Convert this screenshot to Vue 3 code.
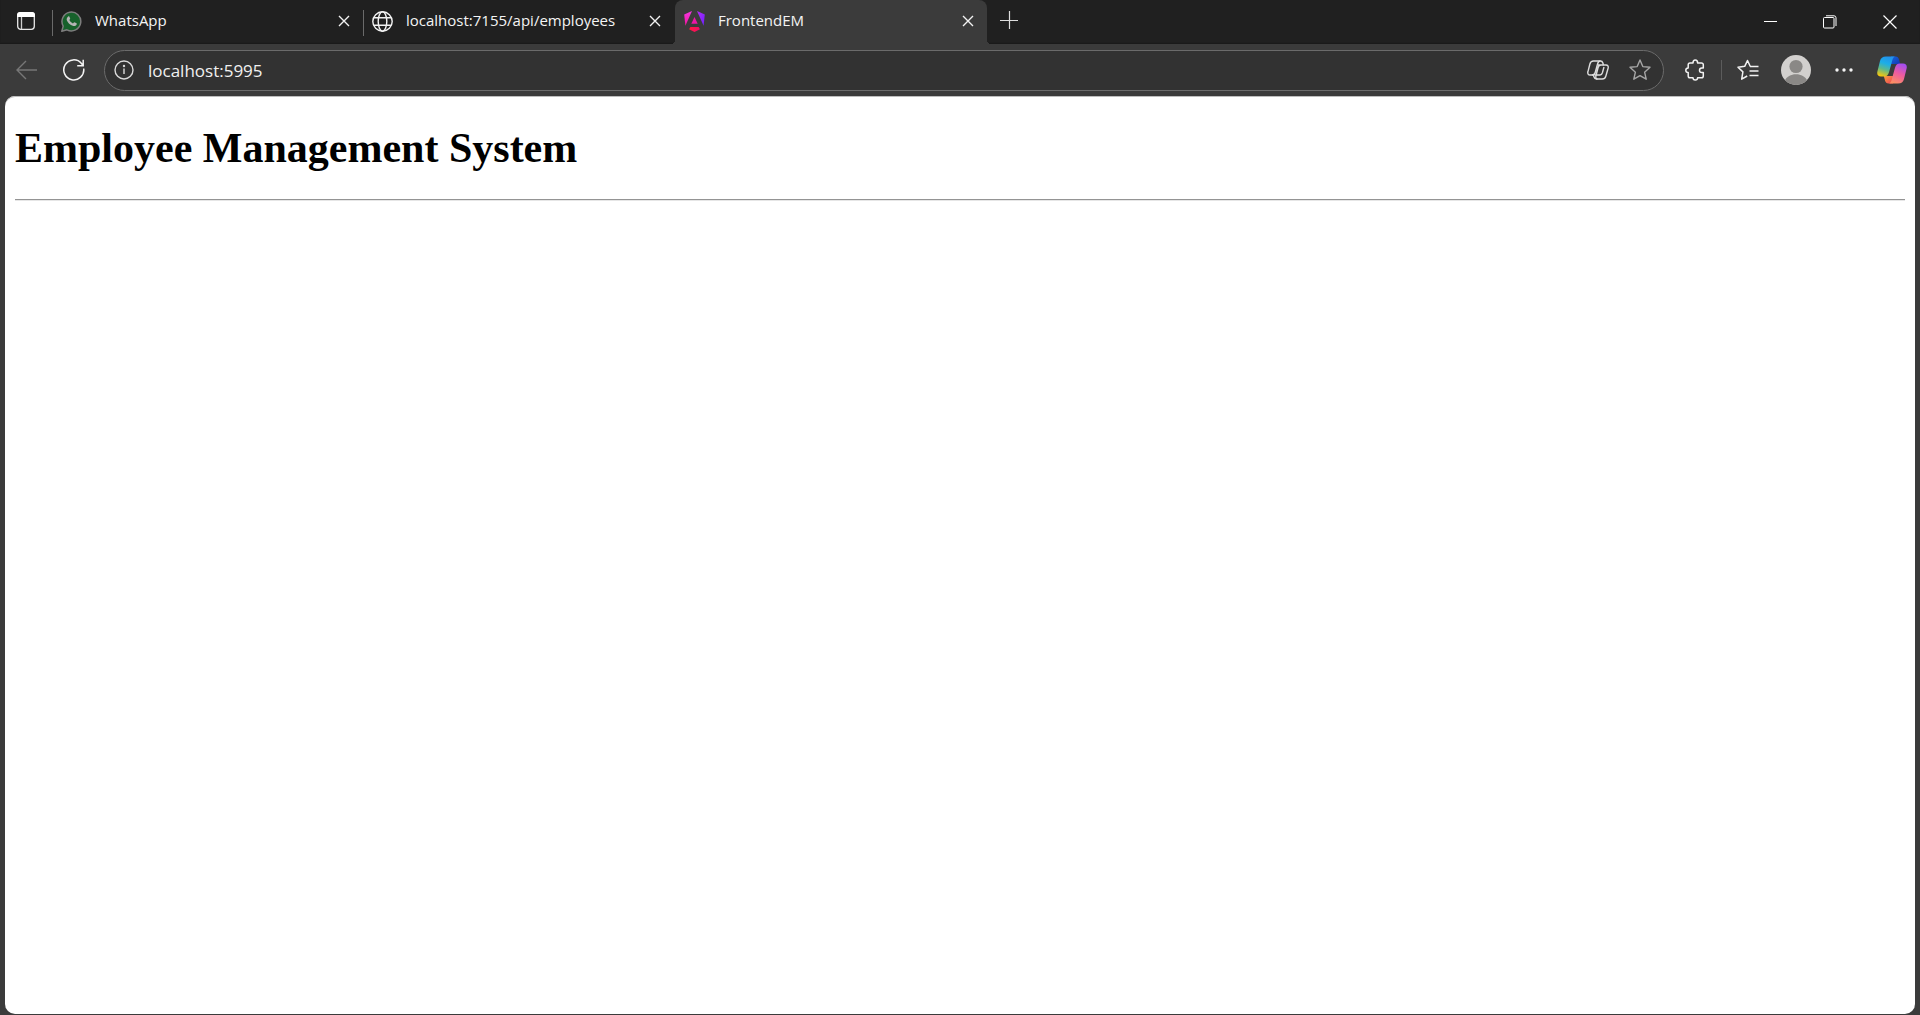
<script setup>
import { ref } from 'vue'

const tabs = ref([
  { id: 'whatsapp', title: 'WhatsApp' },
  { id: 'globe', title: 'localhost:7155/api/employees' },
  { id: 'angular', title: 'FrontendEM' },
])
const active = ref('angular')
const address = ref('localhost:5995')
</script>

<template>
  <div class="browser">
    <header class="strip">
      <button class="workspace" type="button" aria-label="Tab actions">
        <svg width="20" height="20" viewBox="0 0 20 20">
          <rect x="1.7" y="1.7" width="16.6" height="16.6" rx="3" fill="none" stroke="#e8e8e8" stroke-width="1.3" />
          <path d="M1 6V4a3 3 0 0 1 3-3h12a3 3 0 0 1 3 3v2z" fill="#fff" />
          <path d="M5.5 6v12" stroke="#cfcfcf" stroke-width="1.3" />
        </svg>
      </button>
      <nav class="tabs">
        <div v-for="tab in tabs" :key="tab.id" class="tab" :class="{ active: tab.id === active }">
          <svg v-if="tab.id === 'whatsapp'" class="favicon" viewBox="0 0 21 21">
            <path d="M.8 20.2l1.4-5.1A9.4 9.4 0 1 1 6 18.8z" fill="#17612b" stroke="#7d7d7d" stroke-width="1.5" stroke-linejoin="round" />
            <path d="M7.2 5.5c.5-.4 1-.2 1.2.2l.8 1.9c.1.4-.6 1-.8 1.4.8 1.7 2 2.7 3.6 3.4.5-.2 1-1.3 1.5-1.1l2 1c.5.3.2 1.2-.1 1.7-.7 1-2.1 1.2-3.1.9-3.5-1-5.5-3-6.5-5.6-.4-1.5.2-3 1.4-3.8z" fill="#b5b5b5" />
          </svg>
          <svg v-else-if="tab.id === 'globe'" class="favicon" viewBox="0 0 21 21" fill="none" stroke="#f2f2f2" stroke-width="1.4">
            <circle cx="10.5" cy="10.5" r="9.7" />
            <ellipse cx="10.5" cy="10.5" rx="4.3" ry="9.7" />
            <path d="M1.8 6.8h17.4M1.8 14.2h17.4" />
          </svg>
          <svg v-else class="favicon" viewBox="0 0 21 21">
            <defs>
              <linearGradient id="ng-left" x1="0" y1="0" x2="0" y2="1">
                <stop offset="0" stop-color="#f637e3" /><stop offset="1" stop-color="#f0149c" />
              </linearGradient>
              <linearGradient id="ng-right" x1="0" y1="0" x2="1" y2="1">
                <stop offset="0" stop-color="#b52cf5" /><stop offset="1" stop-color="#6a20ff" />
              </linearGradient>
              <linearGradient id="ng-base" x1="0" y1="0" x2="1" y2="0">
                <stop offset="0" stop-color="#ff1a3c" /><stop offset="1" stop-color="#f00a6e" />
              </linearGradient>
            </defs>
            <path d="M8 0L.2 3.4l1.2 11.3z" fill="url(#ng-left)" />
            <path d="M13 0l7.8 3.4-1.2 11.3z" fill="url(#ng-right)" />
            <path d="M10.5 6l3.2 6.800H7.300z" fill="#ec16a6" />
            <path d="M6.400 16h8.200l1.300 2.200-5.400 2.800-5.400-2.800z" fill="url(#ng-base)" />
          </svg>
          <button class="title" type="button" @click="active = tab.id">{{ tab.title }}</button>
          <button class="close" type="button" :aria-label="'Close ' + tab.title">
            <svg width="12" height="12" viewBox="0 0 12 12"><path d="M1 1l10 10M11 1L1 11" stroke="#f2f2f2" stroke-width="1.4" /></svg>
          </button>
        </div>
      </nav>
      <button class="new-tab" type="button" aria-label="New tab">
        <svg width="20" height="20" viewBox="0 0 20 20"><path d="M10.5 1v18M1 10.5h18" stroke="#dedede" stroke-width="1.2" /></svg>
      </button>
      <div class="window-controls">
        <button type="button" aria-label="Minimize">
          <svg width="14" height="14" viewBox="0 0 14 14"><path d="M1 6.5h13" stroke="#fff" /></svg>
        </button>
        <button type="button" aria-label="Restore">
          <svg width="14" height="14" viewBox="0 0 14 14" fill="none" stroke="#fff">
            <rect x=".5" y="2.5" width="10.5" height="10.5" rx="1" />
            <path d="M3 .8h8a2 2 0 0 1 2 2V11" />
          </svg>
        </button>
        <button type="button" aria-label="Close window">
          <svg width="14" height="14" viewBox="0 0 14 14"><path d="M.5.5l13 13M13.5.5l-13 13" stroke="#fff" stroke-width="1.2" /></svg>
        </button>
      </div>
    </header>

    <div class="toolbar">
      <button class="tool nav" type="button" aria-label="Back" disabled>
        <svg width="22" height="20" viewBox="0 0 22 20" fill="none" stroke="#777" stroke-width="1.4"><path d="M21 10H1.2M10 1L1 10l9 9" /></svg>
      </button>
      <button class="tool nav" type="button" aria-label="Refresh">
        <svg width="22" height="22" viewBox="0 0 22 22" fill="none" stroke="#f4f4f4" stroke-width="1.5"><path d="M20.7 9.5A10 10 0 1 1 18.5 4.500l1.700 2.200M20.200.8v6h-6" /></svg>
      </button>
      <div class="address">
        <button class="tool info" type="button" aria-label="Site information">
          <svg width="20" height="20" viewBox="0 0 20 20" fill="none" stroke="#dadada" stroke-width="1.4">
            <circle cx="10" cy="10" r="9" /><path d="M10 8.5V14" /><circle cx="10" cy="6" r=".5" />
          </svg>
        </button>
        <input v-model="address" type="text" aria-label="Address" spellcheck="false" />
        <button class="tool" type="button" aria-label="Copilot mode">
          <svg width="22" height="20" viewBox="0 0 22 20" fill="none" stroke="#dcdcdc" stroke-width="1.4" stroke-linejoin="round">
            <path d="M6.5 1h7c1.500 0 2 .8 2.400 2l.5 2H19c1.800 0 2.600 1.500 2.100 3.200l-2.300 8c-.5 1.800-1.800 2.800-3.600 2.800H9.500c-1.600 0-2.200-.8-2.600-2.200L6.400 15H3c-1.700 0-2.600-1.500-2.100-3.200l2-7.800C3.400 2 4.700 1 6.500 1z" />
            <path d="M13.500 1c-1.500 0-2.400 1-2.800 2.500L8.200 12.500C7.700 14.200 7 15 5 15M16.400 5H14c-1.600 0-2.500 1-2.900 2.500L8.900 16c-.4 1.600.2 3 1.600 3M11 5h4M7.500 15h5.500c1.400 0 2-1 2.400-2.300L17 7" />
          </svg>
        </button>
        <button class="tool" type="button" aria-label="Add to favorites">
          <svg width="22" height="22" viewBox="0 0 22 22" fill="none" stroke="#a6a6a6" stroke-width="1.4" stroke-linejoin="round"><path d="M11 1l2.800 6.600 7.200.700-5.400 4.900 1.600 7L11 16.600l-6.200 3.600 1.600-7L1 8.300l7.200-.7z" /></svg>
        </button>
      </div>
      <button class="tool extensions" type="button" aria-label="Extensions">
        <svg width="20" height="22" viewBox="0 0 20 22" fill="none" stroke="#f2f2f2" stroke-width="1.5" stroke-linejoin="round">
          <path d="M5 4h3c0-2 .6-3 2.300-3s2.300 1 2.300 3h3.900a1.800 1.800 0 0 1 1.800 1.800V9h-1.500a2.300 2.300 0 0 0 0 4.600h1.500V17a1.800 1.800 0 0 1-1.800 1.800h-3.900c0 1.500-.6 2.300-2.300 2.300S8 20.300 8 18.800H5A1.800 1.800 0 0 1 3.200 17v-3.400C1.600 13.600.8 12.900.8 11.300S1.600 9 3.200 9V5.800A1.800 1.800 0 0 1 5 4z" />
        </svg>
      </button>
      <span class="divider"></span>
      <button class="tool favorites" type="button" aria-label="Favorites">
        <svg width="22" height="22" viewBox="0 0 22 22" fill="none" stroke="#f2f2f2" stroke-width="1.5" stroke-linejoin="round">
          <path d="M14.5 7.500l-1.300-.2L10.500 1.500 7.700 7.300 1 8.200l4.900 4.700-1.200 7.300 5.500-3.200M13 7.500h8.500M12.500 12h9M12.500 16.500h9" />
        </svg>
      </button>
      <button class="tool profile" type="button" aria-label="Profile">
        <svg width="30" height="30" viewBox="0 0 30 30">
          <defs><clipPath id="avatar-clip"><circle cx="15" cy="15" r="15" /></clipPath></defs>
          <g clip-path="url(#avatar-clip)">
            <rect width="30" height="30" fill="#d2d0ce" />
            <circle cx="15" cy="11.5" r="6.600" fill="#8a8886" />
            <path d="M3.500 26c2-4.500 6.500-6.800 11.500-6.800S24.500 21.500 26.500 26L22 31H8z" fill="#8a8886" />
          </g>
        </svg>
      </button>
      <button class="tool more" type="button" aria-label="Settings and more">
        <svg width="18" height="4" viewBox="0 0 18 4" fill="#f4f4f4"><circle cx="2" cy="2" r="1.700" /><circle cx="9" cy="2" r="1.700" /><circle cx="16" cy="2" r="1.700" /></svg>
      </button>
      <button class="tool copilot" type="button" aria-label="Copilot">
        <svg width="30" height="28" viewBox="0 0 30 28">
          <defs>
            <linearGradient id="cp-left" x1=".6" y1="0" x2=".3" y2="1">
              <stop offset="0" stop-color="#2292ec" /><stop offset=".35" stop-color="#1caee8" /><stop offset=".65" stop-color="#5fb98a" /><stop offset="1" stop-color="#f6c70c" />
            </linearGradient>
            <linearGradient id="cp-right" x1=".7" y1="0" x2=".3" y2="1">
              <stop offset="0" stop-color="#a44df0" /><stop offset=".5" stop-color="#ee5c9e" /><stop offset="1" stop-color="#fb9062" />
            </linearGradient>
            <linearGradient id="cp-top" x1="0" y1="0" x2="1" y2="1">
              <stop offset="0" stop-color="#1666dc" /><stop offset="1" stop-color="#1236b0" />
            </linearGradient>
            <linearGradient id="cp-bottom" x1="0" y1="0" x2="1" y2="1">
              <stop offset="0" stop-color="#f8a03c" /><stop offset="1" stop-color="#ee3f58" />
            </linearGradient>
          </defs>
          <path d="M14 .5h4.500c2 0 2.900 1.100 3.500 3L23.200 8H13.500z" fill="url(#cp-top)" />
          <path d="M16 27.500h-4.500c-2 0-2.900-1.100-3.500-3L6.800 20h9.700z" fill="url(#cp-bottom)" />
          <path d="M9 .5h9c-1.600.5-2.200 2-2.700 3.700l-3.300 12c-.8 2.800-2.300 4.300-4.800 4.300H4c-3 0-4.300-2-3.600-5L3 5C3.800 2 5.500.5 9 .5z" fill="url(#cp-left)" />
          <path d="M21 27.500h-9c1.600-.5 2.200-2 2.700-3.700l3.300-12c.8-2.800 2.300-4.300 4.800-4.300H26c3 0 4.300 2 3.600 5L27 23c-.8 3-2.500 4.500-6 4.500z" fill="url(#cp-right)" />
        </svg>
      </button>
    </div>

    <main class="page">
      <h1>Employee Management System</h1>
      <hr />
    </main>
  </div>
</template>

<style>
body {
  margin: 0;
}
</style>

<style scoped>
.browser {
  box-sizing: border-box;
  display: flex;
  flex-direction: column;
  min-height: 100vh;
  padding-bottom: 1px;
  background: #3b3b3b;
  font-family: "Open Sans", "Noto Sans", sans-serif;
}

button {
  display: flex;
  align-items: center;
  justify-content: center;
  flex: none;
  padding: 0;
  border: 0;
  background: none;
  color: inherit;
  font: inherit;
}

svg {
  display: block;
  flex: none;
}

.strip {
  display: flex;
  height: 44px;
  background: #202020;
  color: #f4f4f4;
  box-shadow: inset 0 -1px 1px #1a1a1a;
}

.workspace {
  width: 52px;
  height: 40px;
  padding-top: 1px;
}

.tabs {
  display: flex;
  min-width: 0;
}

.tab {
  box-sizing: border-box;
  display: flex;
  align-items: center;
  width: 311px;
  padding: 0 8px 2px 9px;
  background: linear-gradient(#6a6a6a, #6a6a6a) 0 10px / 1px 26px no-repeat;
}

.tab.active {
  position: relative;
  width: 312px;
  margin-left: 1px;
  border-radius: 8px 8px 0 0;
  background: #3b3b3b;
}

.tab.active::before,
.tab.active::after {
  content: "";
  position: absolute;
  bottom: 0;
  width: 4px;
  height: 4px;
}

.tab.active::before {
  right: 100%;
  background: radial-gradient(circle at 0 0, transparent 4px, #3b3b3b 4px);
}

.tab.active::after {
  left: 100%;
  background: radial-gradient(circle at 100% 0, transparent 4px, #3b3b3b 4px);
}

.favicon {
  width: 21px;
  height: 21px;
}

.title {
  flex: 1;
  justify-content: flex-start;
  min-width: 0;
  height: 24px;
  margin: 0 8px 2px 13px;
  overflow: hidden;
  font-size: 15px;
  line-height: 24px;
  white-space: nowrap;
}

.close {
  width: 22px;
  height: 22px;
}

.new-tab {
  width: 44px;
  height: 40px;
}

.window-controls {
  display: flex;
  margin-left: auto;
}

.window-controls button {
  width: 60px;
}

.toolbar {
  display: flex;
  align-items: center;
  box-sizing: border-box;
  height: 52px;
  padding: 0 7px 0 3px;
}

.tool {
  width: 42px;
  height: 36px;
}

.nav {
  width: 47px;
}

.address {
  box-sizing: border-box;
  display: flex;
  align-items: center;
  flex: 1;
  min-width: 0;
  height: 41px;
  margin-left: 7px;
  padding-right: 2px;
  border: 1px solid #6b6b6b;
  border-radius: 21px;
  background: #323232;
}

.info {
  width: 38px;
}

.address input {
  flex: 1;
  min-width: 0;
  height: 36px;
  padding: 0 0 0 5px;
  border: 0;
  outline: 0;
  background: none;
  color: #f0f0f0;
  font: 17px/24px "Open Sans", "Noto Sans", sans-serif;
}

.extensions {
  margin-left: 10px;
}

.divider {
  width: 1px;
  height: 20px;
  margin: 0 5px;
  background: #5c5c5c;
}

.profile {
  width: 54px;
}

.more {
  margin-right: 6px;
}

.page {
  flex: 1;
  margin: 0 5px;
  padding: 1px 10px 10px;
  border-radius: 10px;
  background: #fff;
  box-shadow: inset 0 1px #bdbdbd;
  color: #000;
  font-family: "Liberation Serif", "Times New Roman", serif;
}

h1 {
  margin: 27px 0;
  font-size: 42px;
  line-height: 48px;
}

hr {
  margin: 0;
  border: solid;
  border-width: 1px 0;
  border-color: #949494 transparent #e6e6e6;
}
</style>
